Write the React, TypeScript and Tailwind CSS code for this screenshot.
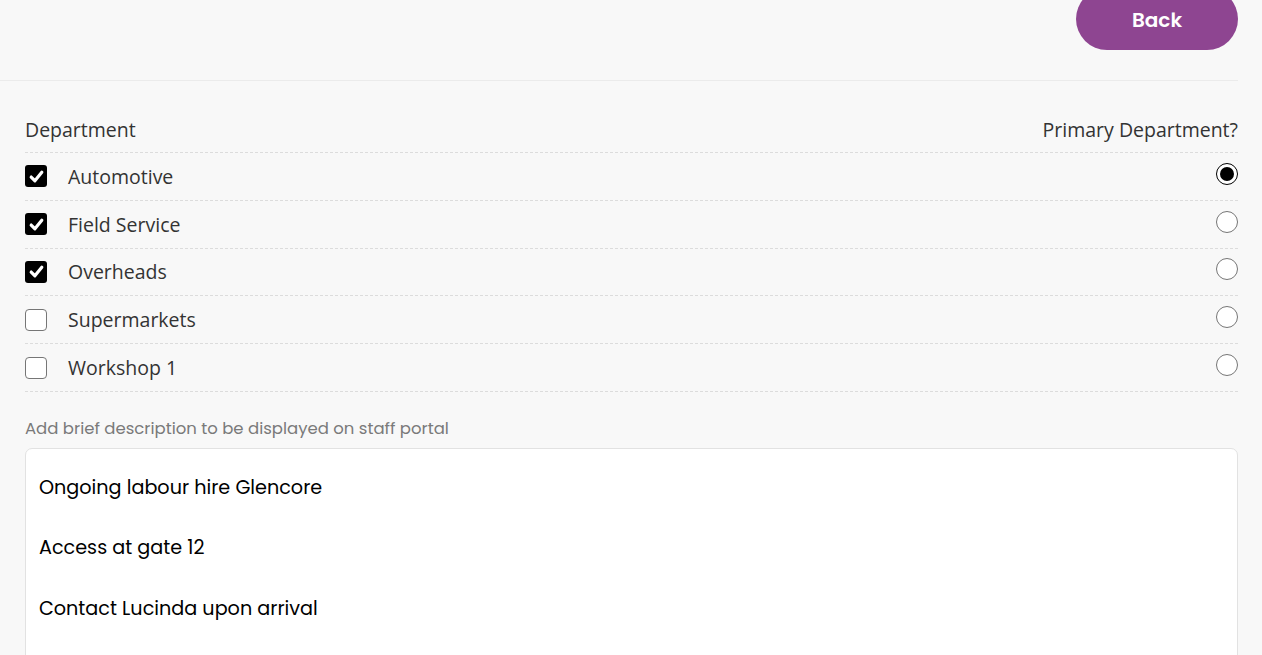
import { useState } from 'react';

const DEPARTMENTS = [
  { name: 'Automotive', checked: true },
  { name: 'Field Service', checked: true },
  { name: 'Overheads', checked: true },
  { name: 'Supermarkets', checked: false },
  { name: 'Workshop 1', checked: false },
];

function CheckBox({ checked }: { checked: boolean }) {
  if (checked) {
    return (
      <span className="flex h-[22px] w-[22px] items-center justify-center rounded-[3px] bg-black">
        <svg viewBox="0 0 16 16" className="h-[17px] w-[17px]">
          <path d="M3 8.5 L6.5 12 L13 4" fill="none" stroke="white" strokeWidth="3" strokeLinecap="round" strokeLinejoin="round" />
        </svg>
      </span>
    );
  }
  return <span className="block h-[22px] w-[22px] rounded-[4px] border border-[#767676] bg-white" />;
}

function Radio({ checked }: { checked: boolean }) {
  if (checked) {
    return (
      <span className="flex h-[22px] w-[22px] items-center justify-center rounded-full border-[1.5px] border-black bg-white">
        <span className="block h-[14px] w-[14px] rounded-full bg-black" />
      </span>
    );
  }
  return <span className="block h-[22px] w-[22px] rounded-full border border-[#767676] bg-white" />;
}

export default function App() {
  const [primary] = useState('Automotive');
  return (
    <div className="min-h-screen overflow-hidden bg-[#f8f8f8]">
      <div className="mr-[24px] flex h-[81px] items-start justify-end border-b border-[#ebebeb]">
        <button className="-mt-[12px] h-[62px] w-[162px] rounded-full bg-[#8e4591] font-['Poppins','Inter',sans-serif] text-[20px] font-semibold text-white">
          <span className="relative top-[1px]">Back</span>
        </button>
      </div>

      <div className="px-[25px] pr-[24px] font-['Open_Sans',sans-serif] text-[19.5px] text-[#333]">
        <div className="flex h-[72px] items-end justify-between border-b border-dashed border-[#dcdcdc] pb-[8px]">
          <span>Department</span>
          <span>Primary Department?</span>
        </div>
        {DEPARTMENTS.map((d) => (
          <div
            key={d.name}
            className="flex h-[47.8px] items-center justify-between border-b border-dashed border-[#dcdcdc]"
          >
            <div className="flex items-center gap-[21px]">
              <CheckBox checked={d.checked} />
              <span>{d.name}</span>
            </div>
            <div className="-mt-[5px]">
              <Radio checked={primary === d.name} />
            </div>
          </div>
        ))}

        <p className="mt-[25px] font-['Poppins','Inter',sans-serif] text-[16.5px] text-[#7a7a7a]">
          Add brief description to be displayed on staff portal
        </p>
        <div className="mt-[6px] h-[300px] rounded-[7px] border border-[#e2e2e2] bg-white px-[13px] pt-[24px] font-['Poppins','Inter',sans-serif] text-[19.2px] leading-[30px] text-black">
          <p>Ongoing labour hire Glencore</p>
          <p className="mt-[30px]">Access at gate 12</p>
          <p className="mt-[31px]">Contact Lucinda upon arrival</p>
        </div>
      </div>
    </div>
  );
}
